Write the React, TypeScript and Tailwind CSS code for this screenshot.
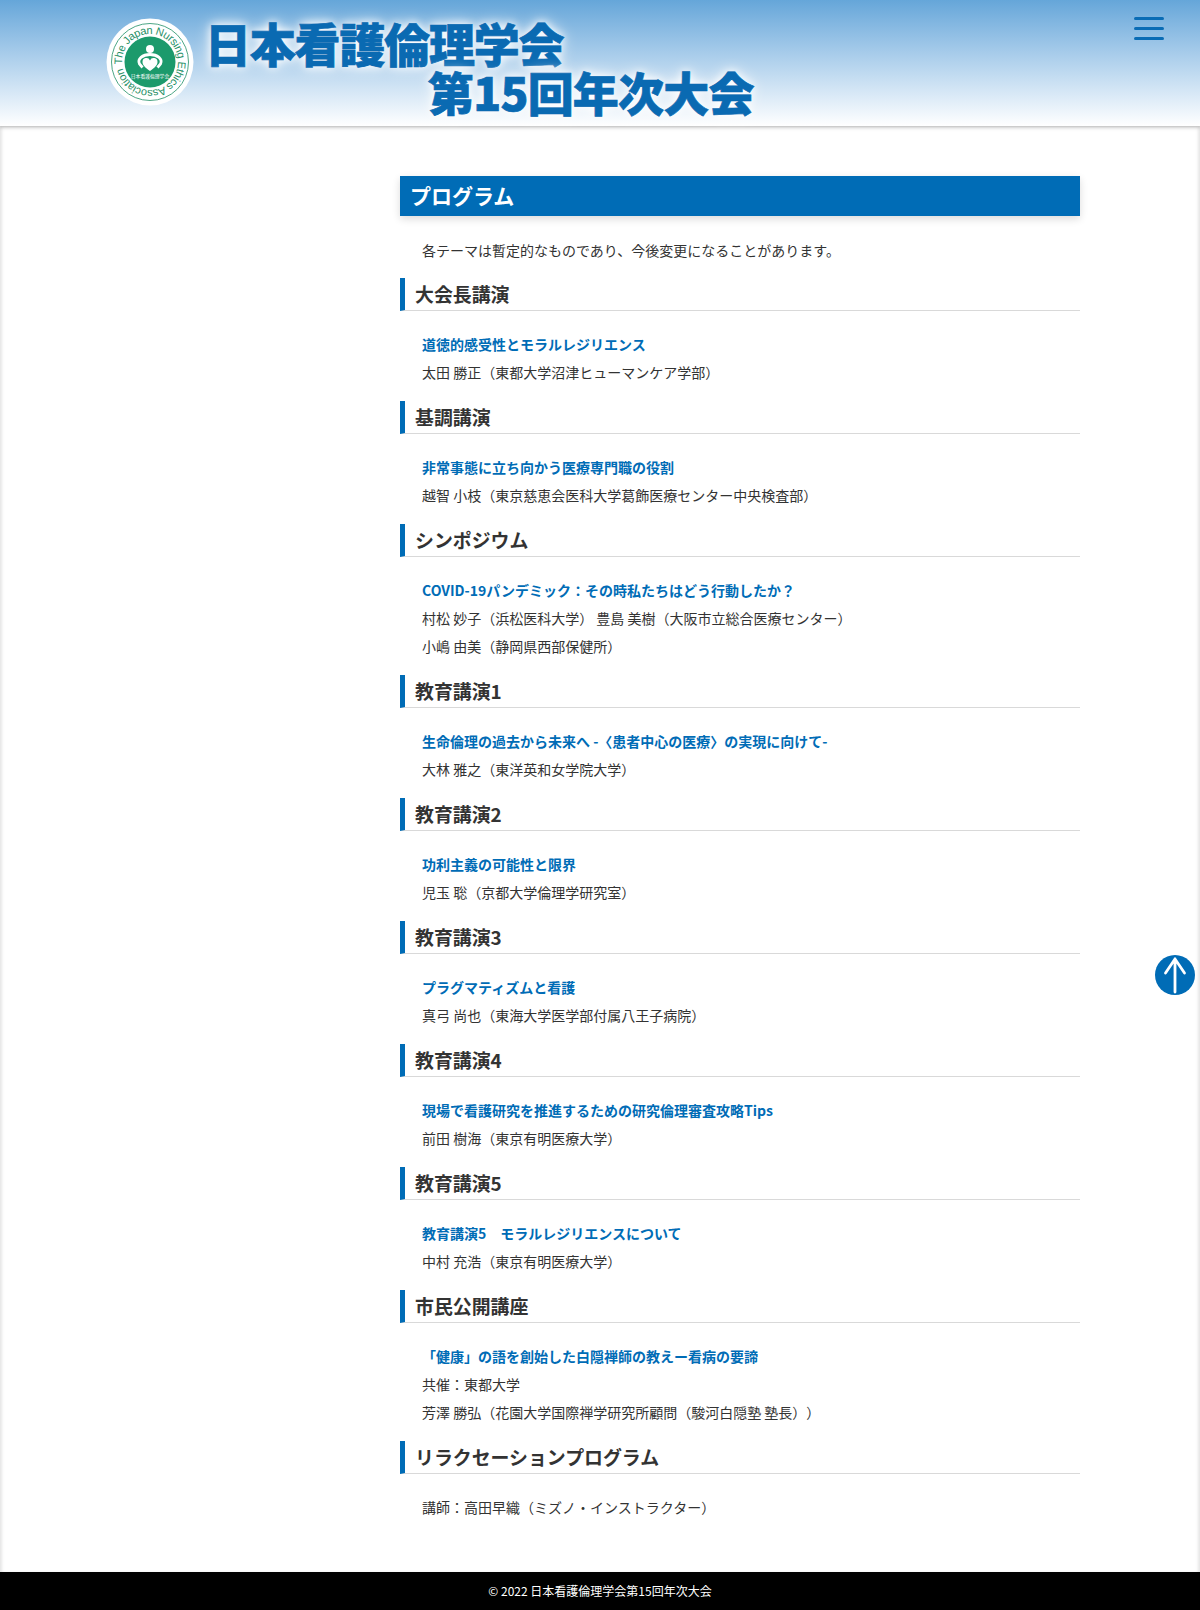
const sections: { h: string; t?: string; lines: string[] }[] = [
  { h: "大会長講演", t: "道徳的感受性とモラルレジリエンス", lines: ["太田 勝正（東都大学沼津ヒューマンケア学部）"] },
  { h: "基調講演", t: "非常事態に立ち向かう医療専門職の役割", lines: ["越智 小枝（東京慈恵会医科大学葛飾医療センター中央検査部）"] },
  { h: "シンポジウム", t: "COVID-19パンデミック：その時私たちはどう行動したか？", lines: ["村松 妙子（浜松医科大学） 豊島 美樹（大阪市立総合医療センター）", "小嶋 由美（静岡県西部保健所）"] },
  { h: "教育講演1", t: "生命倫理の過去から未来へ -〈患者中心の医療〉の実現に向けて-", lines: ["大林 雅之（東洋英和女学院大学）"] },
  { h: "教育講演2", t: "功利主義の可能性と限界", lines: ["児玉 聡（京都大学倫理学研究室）"] },
  { h: "教育講演3", t: "プラグマティズムと看護", lines: ["真弓 尚也（東海大学医学部付属八王子病院）"] },
  { h: "教育講演4", t: "現場で看護研究を推進するための研究倫理審査攻略Tips", lines: ["前田 樹海（東京有明医療大学）"] },
  { h: "教育講演5", t: "教育講演5　モラルレジリエンスについて", lines: ["中村 充浩（東京有明医療大学）"] },
  { h: "市民公開講座", t: "「健康」の語を創始した白隠禅師の教えー看病の要諦", lines: ["共催：東都大学", "芳澤 勝弘（花園大学国際禅学研究所顧問（駿河白隠塾 塾長））"] },
  { h: "リラクセーションプログラム", lines: ["講師：高田早織（ミズノ・インストラクター）"] },
];

function Logo() {
  return (
    <svg width="88" height="88" viewBox="0 0 88 88" className="shrink-0">
      <circle cx="44" cy="44" r="43.5" fill="#ffffff" />
      <circle cx="44" cy="44" r="38.5" fill="none" stroke="#1f8f66" strokeWidth="0.8" />
      <circle cx="44" cy="44" r="25.5" fill="#1c9a6c" />
      <defs>
        <path id="ring" d="M16.100 46.500A28 28 0 1 1 71.900 41.500A28 28 0 1 1 16.100 46.500" />
      </defs>
      <text fontSize="11" fill="#1f8f66" fontFamily="'Liberation Sans', sans-serif">
        <textPath href="#ring" textLength="172">The Japan Nursing Ethics Association</textPath>
      </text>
      <circle cx="44" cy="31" r="4" fill="#fff" />
      <path d="M36.500 49.500L33.500 46c-2.500-5 3-9.500 10.500-9.500s13 4.500 10.500 9.500L51.500 49.500" fill="none" stroke="#fff" strokeWidth="2.800" />
      <path d="M44 53c-5-3.500-7.500-6-7.500-9a3.900 3.900 0 0 1 7.500-1.600a3.900 3.900 0 0 1 7.500 1.600c0 3-2.500 5.500-7.500 9z" fill="#fff" />
      <text x="44" y="60" textAnchor="middle" fontSize="4.800" fill="#fff" fontFamily="'Noto Sans CJK JP', sans-serif">日本看護倫理学会</text>
    </svg>
  );
}

export default function App() {
  return (
    <div className="w-[1200px] bg-white text-[#333333] font-['Noto_Sans_CJK_JP','Noto_Sans',sans-serif] text-[14px] leading-[28px] [text-spacing-trim:space-all]">
      <header className="relative z-10 h-[126px] bg-gradient-to-b from-[#65a6d9] to-white shadow-[0_1px_4px_rgba(0,0,0,0.3)] flex items-start pl-[106px] pt-[18px]">
        <Logo />
        <div className="ml-[11px] font-black text-[#0a6ab2] text-[46px] leading-[49px] [-webkit-text-stroke:0.7px_#0a6ab2] [text-shadow:0_0_8px_#ffffff,0_0_16px_#ffffff]">
          <div className="tracking-[-1.2px]">日本看護倫理学会</div>
          <div className="ml-[223px] tracking-[-0.8px]">第15回年次大会</div>
        </div>
        <div className="absolute left-[1134px] top-[17px] flex flex-col gap-[7px]">
          <span className="block w-[30px] h-[3px] rounded-sm bg-[#0a6cb5]" />
          <span className="block w-[30px] h-[3px] rounded-sm bg-[#0a6cb5]" />
          <span className="block w-[30px] h-[3px] rounded-sm bg-[#0a6cb5]" />
        </div>
      </header>

      <main className="h-[1446px] pl-[400px] pr-[120px] pt-[50px] shadow-[inset_3px_0_3px_-1px_rgba(0,0,0,0.1),inset_-3px_0_3px_-1px_rgba(0,0,0,0.1)]">
        <h2 className="h-[40px] bg-[#006cb6] pl-[10px] text-white text-[21px] font-bold leading-[38px] shadow-[0_3px_8px_rgba(0,0,0,0.14)]">プログラム</h2>
        <p className="mt-[20px] pl-[22px]">各テーマは暫定的なものであり、今後変更になることがあります。</p>
        {sections.map((s) => (
          <section key={s.h} className="mt-[15px] first-of-type:mt-[14px]">
            <h3 className="h-[33px] border-l-[5px] border-b border-[#006cb6] [border-bottom-color:#d9d9d9] pl-[10px] text-[18.9px] font-bold leading-[32px]">{s.h}</h3>
            <div className="pl-[22px] pt-[19px]">
              {s.t && <p className="font-bold text-[#006cb6]">{s.t}</p>}
              {s.lines.map((l) => <p key={l}>{l}</p>)}
            </div>
          </section>
        ))}
      </main>

      <footer className="h-[38px] bg-black text-white text-center text-[12px] leading-[38px]">© 2022 日本看護倫理学会第15回年次大会</footer>

      <div className="absolute left-[1155px] top-[955px]">
        <svg width="40" height="40" viewBox="0 0 40 40">
          <circle cx="20" cy="20" r="20" fill="#006cb6" />
          <path d="M20 37V4M10.500 18L20 4L29.500 18" fill="none" stroke="#fff" strokeWidth="2.800" strokeLinecap="round" strokeLinejoin="round" />
        </svg>
      </div>
    </div>
  );
}
